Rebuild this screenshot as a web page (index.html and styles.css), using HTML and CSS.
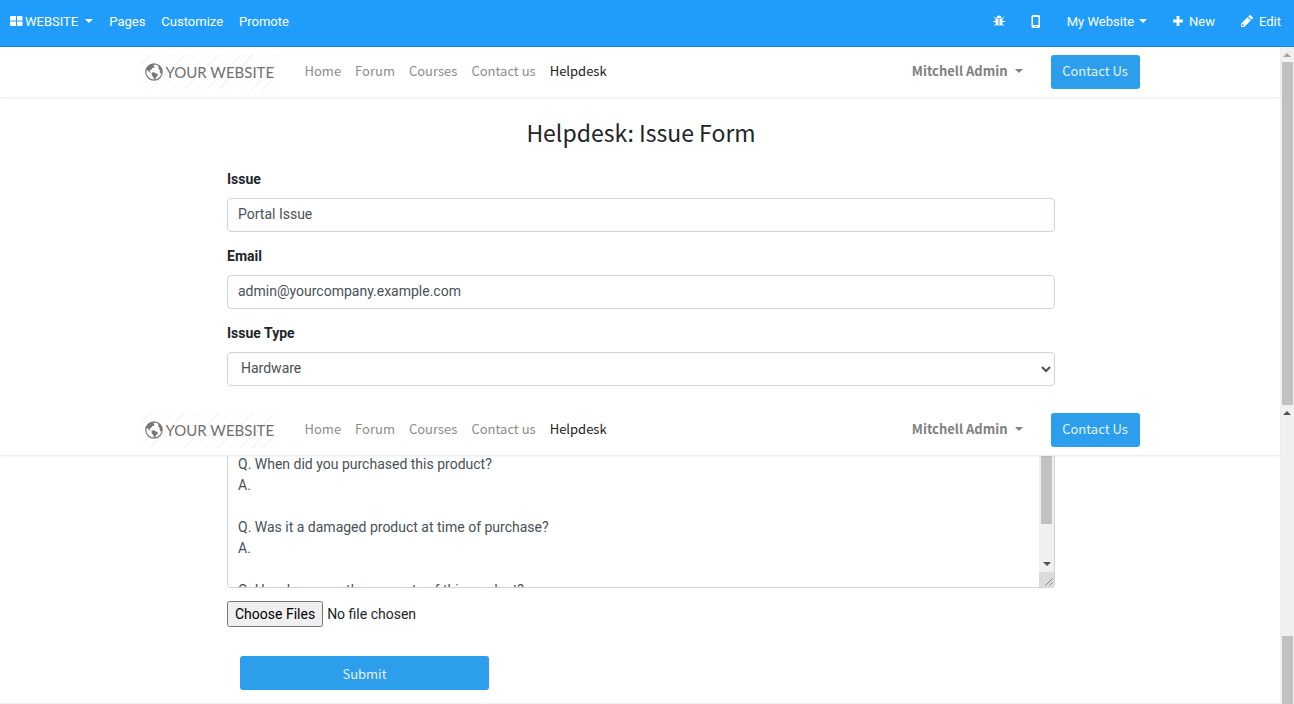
FILE: index.html
```html
<!DOCTYPE html>
<html lang="en">
<head>
<meta charset="utf-8">
<title>Helpdesk: Issue Form</title>
<link rel="stylesheet" href="styles.css">
</head>
<body>
<svg class="sprite" aria-hidden="true">
  <symbol id="globe" viewBox="0 0 18 18">
    <circle cx="9" cy="9" r="8.200" fill="#fff" stroke="#777" stroke-width="1.200"/>
    <path fill="#777" d="M1.200 7 3 3.500 6 1.500 9 1l1 .8-1.800.9 1.300.8-.8 1.400-1.500.2-.6 1.500-1.700.6-.3 1.200 1.300.6-.4.8L4 9 2.600 7.200zM7 9.500l2-.3 2 1.200 1.900.8-.3 1.800-1.400 1.100-.8 1.700-1.300 1.200-.7-2.600L7 12.600l-.6-1.800zM13 3.200l1.700.4 1.900 3 .3 3.400-1 .8-1.300-1.800.3-1.800-1.300-1.400z"/>
  </symbol>
</svg>

<nav class="topbar">
  <div class="topbar-group">
    <button class="top-item brand" type="button">
      <svg class="grid-icon" viewBox="0 0 13 10" aria-hidden="true"><path fill="#fff" d="M1 0h5v4.500H0V1a1 1 0 0 1 1-1zM7 0h4.500a1 1 0 0 1 1 1v3.500H7zM0 5.500h6V10H1a1 1 0 0 1-1-1zM7 5.500h5.500V9a1 1 0 0 1-1 1H7z"/></svg>
      WEBSITE<span class="caret"></span>
    </button>
    <a class="top-item" href="#">Pages</a>
    <a class="top-item" href="#">Customize</a>
    <a class="top-item" href="#">Promote</a>
  </div>
  <div class="topbar-group right">
    <button class="top-item" type="button" aria-label="Debug">
      <svg width="12" height="12" viewBox="0 0 12 12" aria-hidden="true"><path fill="#fff" d="M3.500 3a2.500 2.500 0 0 1 5 0zM2.500 3.500h3v7.300Q2.600 10.500 2.500 8zM6.500 3.500h3V8q-.1 2.500-3 2.800z"/><path fill="none" stroke="#fff" stroke-width="1" d="M.8 1.800 3 4M11.200 1.800 9 4M0 6.500h3M9 6.500h3M1.200 11 3.200 8.800M10.800 11 8.800 8.800"/></svg>
    </button>
    <button class="top-item phone" type="button" aria-label="Mobile preview">
      <svg width="10" height="13" viewBox="0 0 10 13" aria-hidden="true"><path fill="#fff" fill-rule="evenodd" d="M2 0h5.500A1.500 1.500 0 0 1 9 1.500v10A1.500 1.500 0 0 1 7.500 13H2A1.500 1.500 0 0 1 .5 11.500v-10A1.500 1.500 0 0 1 2 0zM2 2v8h5.500V2zM4 11v1h1.500v-1z"/></svg>
    </button>
    <button class="top-item" type="button">My Website<span class="caret"></span></button>
    <button class="top-item new" type="button">
      <svg width="10" height="10" viewBox="0 0 10 10" aria-hidden="true"><path fill="#fff" d="M3.600 0h2.800v3.600H10v2.800H6.400V10H3.600V6.400H0V3.600h3.600z"/></svg>
      New
    </button>
    <button class="top-item edit" type="button">
      <svg width="12" height="12" viewBox="0 0 12 12" aria-hidden="true"><path fill="#fff" fill-rule="evenodd" d="M0 12V8.800l6.500-6.500 3.200 3.200L3.200 12zM7.200 1.600 8.500.3q.6-.5 1.200 0l2 2q.5.600 0 1.200l-1.300 1.300zM1 9.600V11h1.400l.5-.5-1.400-1.400z"/></svg>
      Edit
    </button>
  </div>
</nav>

<div class="pane">
  <div class="pane-body">
    <header class="site-header">
      <div class="container">
        <a class="logo" href="#"><svg class="logo-globe" aria-hidden="true"><use href="#globe"/></svg>YOUR WEBSITE</a>
        <nav class="menu">
          <a href="#">Home</a><a href="#">Forum</a><a href="#">Courses</a><a href="#">Contact us</a><a class="active" href="#">Helpdesk</a>
        </nav>
        <button class="user" type="button">Mitchell Admin<span class="caret"></span></button>
        <a class="btn contact" href="#">Contact Us</a>
      </div>
    </header>
    <form class="form">
      <h1>Helpdesk: Issue Form</h1>
      <label for="issue">Issue</label>
      <input class="control" id="issue" type="text" value="Portal Issue">
      <label for="email">Email</label>
      <input class="control" id="email" type="email" value="admin@yourcompany.example.com">
      <label for="type">Issue Type</label>
      <select class="control" id="type"><option>Hardware</option></select>
    </form>
  </div>
  <div class="scrollbar" aria-hidden="true"><span class="arrow muted"></span><span class="thumb"></span></div>
</div>

<div class="pane lower">
  <div class="pane-body">
    <header class="site-header">
      <div class="container">
        <a class="logo" href="#"><svg class="logo-globe" aria-hidden="true"><use href="#globe"/></svg>YOUR WEBSITE</a>
        <nav class="menu">
          <a href="#">Home</a><a href="#">Forum</a><a href="#">Courses</a><a href="#">Contact us</a><a class="active" href="#">Helpdesk</a>
        </nav>
        <button class="user" type="button">Mitchell Admin<span class="caret"></span></button>
        <a class="btn contact" href="#">Contact Us</a>
      </div>
    </header>
    <form class="form">
      <div class="textbox">
        <textarea rows="6" aria-label="Description">Q. When did you purchased this product?
A.

Q. Was it a damaged product at time of purchase?
A.

Q. How long was the warranty of this product?
A.</textarea>
        <div class="inner-bar" aria-hidden="true">
          <span class="inner-thumb"></span><span class="arrow down"></span>
          <svg class="grip" viewBox="0 0 15 15"><path stroke="#888" d="M6.500 13.500 13.500 6.500M10.500 13.500l3-3" fill="none"/></svg>
        </div>
      </div>
      <input class="file" type="file" multiple aria-label="Attachments">
      <button class="btn submit" type="button">Submit</button>
    </form>
  </div>
  <div class="scrollbar" aria-hidden="true"><span class="arrow"></span><span class="thumb"></span></div>
</div>
</body>
</html>
```

FILE: styles.css
```css
* { box-sizing: border-box; }
body {
  margin: 0;
  min-height: 100vh;
  display: flex;
  flex-direction: column;
  background: #fff;
  color: #212529;
  font: 14px/21px Roboto, sans-serif;
}
a { color: inherit; text-decoration: none; }
button { border: 0; background: none; padding: 0; color: inherit; font: inherit; cursor: pointer; }
.sprite { display: none; }

.topbar {
  display: flex;
  justify-content: space-between;
  height: 47px;
  padding: 0 13px 4px 10px;
  background: #209dfb;
  border-bottom: 1px solid #1585d8;
  color: #fff;
  font-size: 13px;
}
.topbar-group { display: flex; align-items: center; gap: 16px; }
.topbar-group.right { gap: 26px; }
.top-item { display: flex; align-items: center; }
.brand { gap: 2px; }
.grid-icon { width: 13px; height: 10px; }
.new, .edit { gap: 6px; }
.caret {
  margin-left: 7px;
  border: 4px solid transparent;
  border-top-color: currentColor;
  border-bottom: 0;
}
.topbar .caret { margin-left: 5px; }

.pane { display: flex; min-height: 358px; }
.pane.lower { flex: 1; min-height: 0; }
.pane-body { flex: 1; min-width: 0; }
.lower .pane-body { border-bottom: 1px solid #f0f0f0; }
.site-header {
  position: relative;
  z-index: 1;
  height: 51px;
  background: #fff;
  border-bottom: 1px solid #f0f0f0;
  box-shadow: 0 1px 2px #0000000d;
  font-family: "Noto Sans CJK SC", sans-serif;
  font-size: 13px;
}
.container {
  display: flex;
  align-items: center;
  max-width: 999px;
  height: 50px;
  margin: 0 auto;
}
.logo {
  display: flex;
  align-items: center;
  gap: 3px;
  width: 135px;
  height: 36px;
  padding-left: 4px;
  color: #707070;
  font: 15px/20px Lato, sans-serif;
  white-space: nowrap;
  background: repeating-linear-gradient(135deg, #fff 0 7px, #f5f5f5 7px 8px);
}
.logo-globe { width: 18px; height: 18px; flex: none; }
.menu { display: flex; gap: 14px; margin-left: 29px; padding-bottom: 3px; color: #8c8c8c; }
.menu .active { color: #222; }
.user { display: flex; align-items: center; margin-left: auto; padding-bottom: 3px; color: #808080; font-weight: bold; }
.btn {
  display: flex;
  align-items: center;
  justify-content: center;
  height: 34px;
  padding-bottom: 3px;
  border-radius: 3px;
  background: #2c9eeb;
  color: #e3f3ff;
}
.contact { width: 89px; margin-left: 28px; }

.form { max-width: 830px; margin: 0 auto; padding-left: 2px; }
h1 {
  margin: 18px 0 21px;
  font: 23px/32px "Noto Sans CJK SC", sans-serif;
  text-align: center;
}
.form label { display: block; margin-bottom: 8px; font-weight: bold; }
.control {
  display: block;
  width: 100%;
  height: 34px;
  margin-bottom: 14px;
  padding: 0 10px 2px;
  border: 1px solid #ced4da;
  border-radius: 4px;
  background: #fff;
  color: #495057;
  font: inherit;
}
select.control { padding: 0 0 2px 9px; }

.textbox {
  display: flex;
  height: 134px;
  margin-top: -2px;
  border: 1px solid #ced4da;
  border-top: 0;
  border-radius: 0 0 4px 4px;
  overflow: hidden;
}
textarea {
  flex: 1;
  padding: 0 10px;
  border: 0;
  outline: 0;
  resize: none;
  overflow: hidden;
  color: #495057;
  font: inherit;
}
.inner-bar { display: flex; flex-direction: column; align-items: center; width: 15px; background: #f0f0f0; }
.inner-thumb { width: 11px; height: 70px; background: #c1c1c1; }
.arrow { flex: none; border: 4px solid transparent; border-top: 0; border-bottom-color: #505050; }
.arrow.muted { border-bottom-color: #a3a3a3; }
.arrow.down { margin: auto 0 6px; border-top: 4px solid #505050; border-bottom: 0; }
.grip { width: 15px; height: 15px; flex: none; background: #dcdcdc; }
.file { display: block; margin: 13px 0 29px; color: #212529; font: inherit; }
.file::file-selector-button { padding: 3px 6px; font: inherit; }
.submit {
  width: 249px;
  margin-left: 13px;
  padding-bottom: 0;
  font-family: "Noto Sans CJK SC", sans-serif;
  font-size: 13px;
}

.scrollbar {
  display: flex;
  flex-direction: column;
  align-items: center;
  gap: 5px;
  width: 14px;
  padding-top: 6px;
  background: #f0f0f0;
}
.scrollbar .thumb { width: 11px; flex: 1; background: #c1c1c1; }
.lower .scrollbar .thumb { flex: none; height: 68px; margin-top: auto; }
```
